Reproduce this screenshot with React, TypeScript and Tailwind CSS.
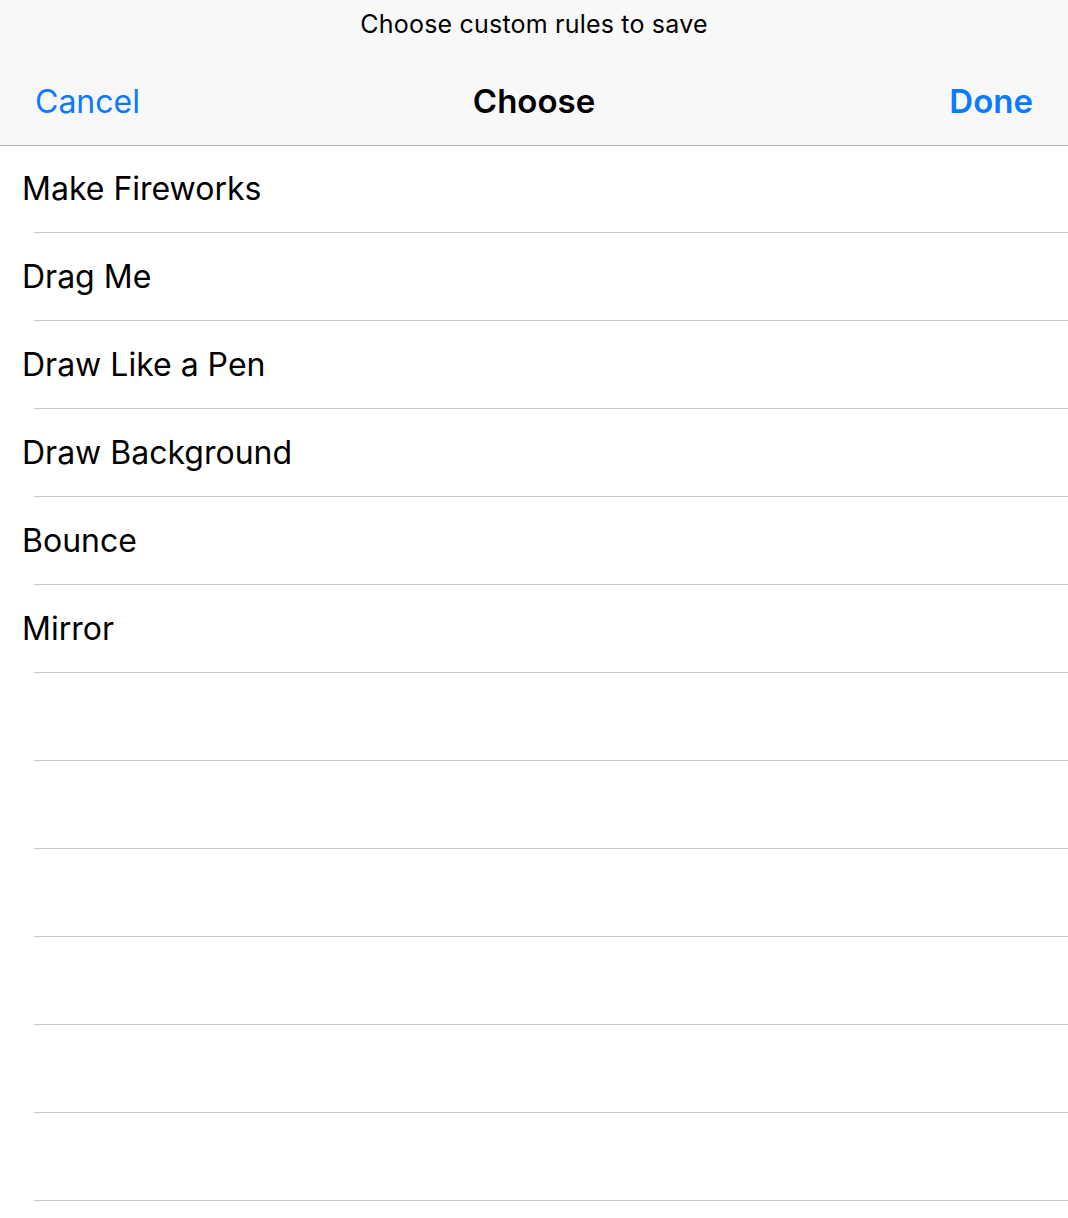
import React from "react";

const items = [
  "Make Fireworks",
  "Drag Me",
  "Draw Like a Pen",
  "Draw Background",
  "Bounce",
  "Mirror",
  "",
  "",
  "",
  "",
  "",
  "",
];

export default function App() {
  return (
    <div
      className="w-[1068px] h-[1218px] bg-white overflow-hidden"
      style={{ fontFamily: "Inter, 'Noto Sans', sans-serif" }}
    >
      <div className="h-[146px] bg-[#f8f8f8] border-b border-[#b2b2b2] flex flex-col">
        <div className="h-[49px] flex items-center justify-center text-[25px] text-black tracking-[0.2px]">
          Choose custom rules to save
        </div>
        <div className="flex-1 grid grid-cols-3 items-center px-[35px] pt-[9px]">
          <span className="justify-self-start text-[32px] text-[#0a7aff]">Cancel</span>
          <span className="justify-self-center text-[33px] font-semibold text-black">Choose</span>
          <span className="justify-self-end text-[33px] font-semibold text-[#0a7aff]">Done</span>
        </div>
      </div>
      <div className="flex flex-col -mt-px">
        {items.map((t, i) => (
          <div key={i} className="h-[88px] flex flex-col">
            <div className="flex-1 flex items-center pl-[22px] pt-[1px] text-[32px] text-black">
              {t}
            </div>
            <div className="ml-[34px] h-px bg-[#c8c7cc]" />
          </div>
        ))}
      </div>
    </div>
  );
}
